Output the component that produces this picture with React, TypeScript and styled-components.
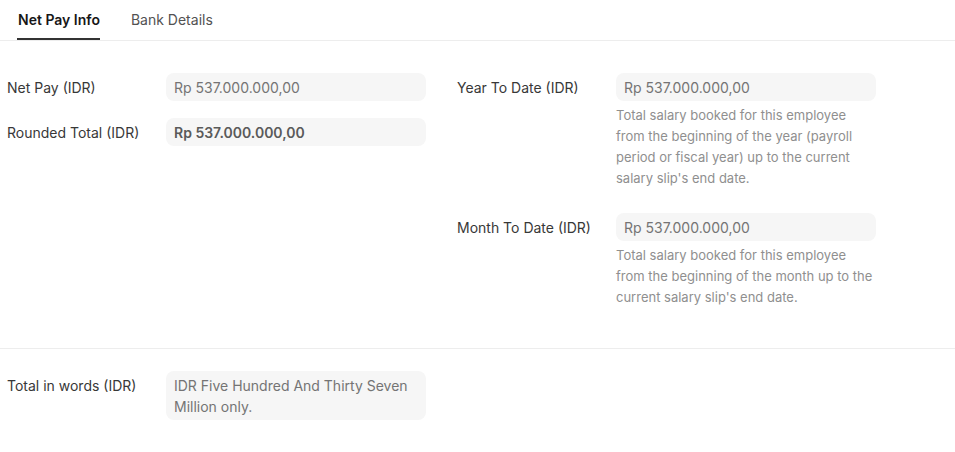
import React from "react";
import styled, { createGlobalStyle } from "styled-components";

const Global = createGlobalStyle`
  html, body { margin: 0; padding: 0; background: #ffffff; }
  body { font-family: Inter, "Noto Sans", sans-serif; font-size: 14px; color: #383838; }
`;

const Page = styled.div`
  width: 955px;
  background: #fff;
`;

const TabBar = styled.div`
  display: flex;
  gap: 30px;
  height: 40px;
  padding-left: 17px;
  border-bottom: 1px solid #ededed;
`;

const Tab = styled.div<{ $active?: boolean }>`
  display: flex;
  align-items: center;
  height: 40px;
  box-sizing: border-box;
  padding: 1px 0 0 1px;
  font-size: 14px;
  font-weight: ${(p) => (p.$active ? 600 : 400)};
  color: ${(p) => (p.$active ? "#171717" : "#525252")};
  border-bottom: 2px solid ${(p) => (p.$active ? "#333333" : "transparent")};
`;

const Section = styled.div<{ $top: number; $divider?: boolean }>`
  display: grid;
  grid-template-columns: 450px 450px;
  padding: ${(p) => p.$top}px 0 16px 7px;
  border-top: ${(p) => (p.$divider ? "1px solid #ededed" : "none")};
`;

const Column = styled.div`
  display: flex;
  flex-direction: column;
`;

const Field = styled.div`
  display: grid;
  grid-template-columns: 159px 260px;
  margin-bottom: 17px;
`;

const Label = styled.div`
  font-size: 14px;
  line-height: 28px;
  padding-top: 1px;
  height: 27px;
  color: #383838;
`;

const ControlWrap = styled.div`
  display: flex;
  flex-direction: column;
`;

const Control = styled.div<{ $bold?: boolean }>`
  background: #f6f6f6;
  border-radius: 8px;
  padding: 4px 8px 3px;
  line-height: 21px;
  font-size: 14px;
  min-height: 21px;
  font-weight: ${(p) => (p.$bold ? 600 : 400)};
  color: ${(p) => (p.$bold ? "#5a5a5a" : "#747474")};
`;

const Help = styled.div`
  margin: 4px 0 7px;
  font-size: 13px;
  line-height: 21px;
  color: #8f8f8f;
`;

export default function App() {
  return (
    <Page>
      <Global />
      <TabBar>
        <Tab $active>Net Pay Info</Tab>
        <Tab>Bank Details</Tab>
      </TabBar>
      <Section $top={32}>
        <Column>
          <Field>
            <Label>Net Pay (IDR)</Label>
            <ControlWrap>
              <Control>Rp 537.000.000,00</Control>
            </ControlWrap>
          </Field>
          <Field>
            <Label>Rounded Total (IDR)</Label>
            <ControlWrap>
              <Control $bold>Rp 537.000.000,00</Control>
            </ControlWrap>
          </Field>
        </Column>
        <Column>
          <Field>
            <Label>Year To Date (IDR)</Label>
            <ControlWrap>
              <Control>Rp 537.000.000,00</Control>
              <Help>
                Total salary booked for this employee from the beginning of the year (payroll
                period or fiscal year) up to the current salary slip's end date.
              </Help>
            </ControlWrap>
          </Field>
          <Field>
            <Label>Month To Date (IDR)</Label>
            <ControlWrap>
              <Control>Rp 537.000.000,00</Control>
              <Help>
                Total salary booked for this employee from the beginning of the month up to the
                current salary slip's end date.
              </Help>
            </ControlWrap>
          </Field>
        </Column>
      </Section>
      <Section $top={22} $divider>
        <Column>
          <Field>
            <Label>Total in words (IDR)</Label>
            <ControlWrap>
              <Control>IDR Five Hundred And Thirty Seven Million only.</Control>
            </ControlWrap>
          </Field>
        </Column>
      </Section>
    </Page>
  );
}
